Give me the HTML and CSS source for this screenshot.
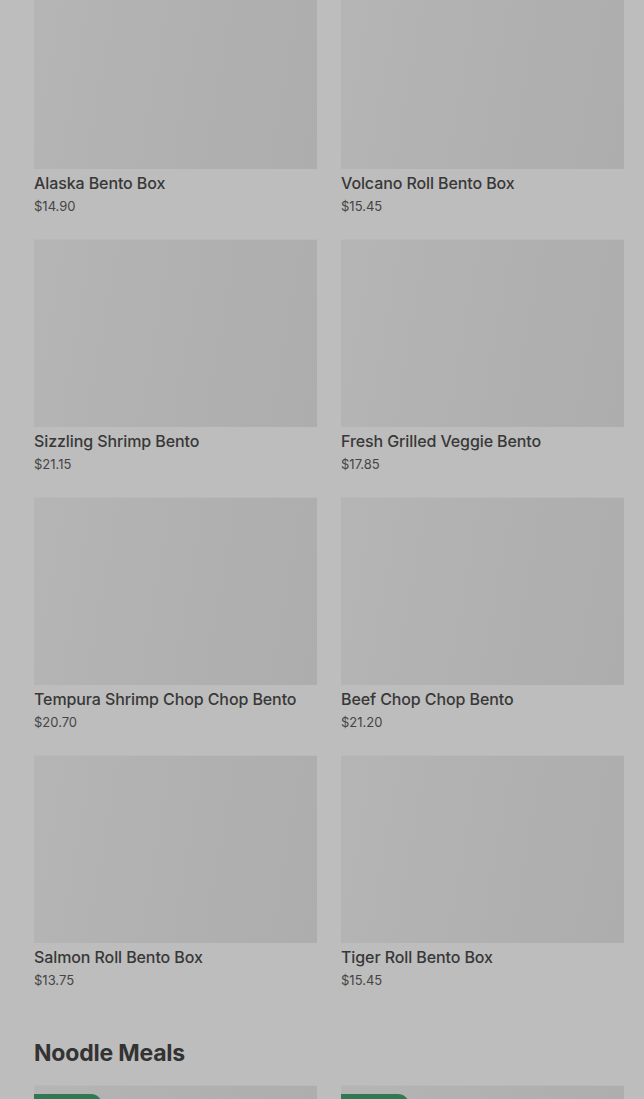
FILE: index.html
```html
<!DOCTYPE html>
<html lang="en">
<head>
  <meta charset="UTF-8" />
  <meta name="viewport" content="width=device-width, initial-scale=1.0"/>
  <title>Menu</title>
  <link rel="stylesheet" href="styles.css">
</head>
<body>
  <div class="menu">
    <div class="grid first">
      <div class="item">
        <div class="foto"></div>
        <div class="nombre">Alaska Bento Box</div>
        <div class="precio">$14.90</div>
      </div>
      <div class="item">
        <div class="foto"></div>
        <div class="nombre">Volcano Roll Bento Box</div>
        <div class="precio">$15.45</div>
      </div>
      <div class="item">
        <div class="foto"></div>
        <div class="nombre">Sizzling Shrimp Bento</div>
        <div class="precio">$21.15</div>
      </div>
      <div class="item">
        <div class="foto"></div>
        <div class="nombre">Fresh Grilled Veggie Bento</div>
        <div class="precio">$17.85</div>
      </div>
      <div class="item">
        <div class="foto"></div>
        <div class="nombre">Tempura Shrimp Chop Chop Bento</div>
        <div class="precio">$20.70</div>
      </div>
      <div class="item">
        <div class="foto"></div>
        <div class="nombre">Beef Chop Chop Bento</div>
        <div class="precio">$21.20</div>
      </div>
      <div class="item">
        <div class="foto"></div>
        <div class="nombre">Salmon Roll Bento Box</div>
        <div class="precio">$13.75</div>
      </div>
      <div class="item">
        <div class="foto"></div>
        <div class="nombre">Tiger Roll Bento Box</div>
        <div class="precio">$15.45</div>
      </div>
    </div>

    <h2>Noodle Meals</h2>

    <div class="grid">
      <div class="item">
        <div class="foto"><span class="badge"></span></div>
      </div>
      <div class="item">
        <div class="foto"><span class="badge"></span></div>
      </div>
    </div>
  </div>
</body>
</html>
```

FILE: styles.css
```css
body {
  margin: 0;
  background-color: #bdbdbd;
  font-family: Inter, "Noto Sans", Arial, sans-serif;
  color: #3a3a3a;
  overflow: hidden;
}

.menu {
  padding: 0 20px 0 34px;
}

.grid {
  display: grid;
  grid-template-columns: 283px 283px;
  column-gap: 24px;
  row-gap: 22px;
}

.first {
  margin-top: -19px;
}

.foto {
  position: relative;
  height: 188px;
  background: linear-gradient(100deg, #b5b5b5 0%, #b1b1b1 45%, #adadad 100%);
  border-top: 1px solid #b9b9b9;
  box-sizing: border-box;
}

.nombre {
  padding-top: 2px;
  font-size: 16px;
  font-weight: 500;
  line-height: 24px;
  letter-spacing: -0.1px;
  color: #383838;
}

.precio {
  font-size: 13px;
  line-height: 22px;
  color: #454545;
}

h2 {
  margin: 46px 0 16px;
  font-size: 23px;
  font-weight: 700;
  line-height: 32px;
  letter-spacing: -0.2px;
  color: #333;
}

/* etiqueta verde sobre la foto */
.badge {
  position: absolute;
  left: 0;
  top: 8px;
  width: 68px;
  height: 22px;
  border-radius: 0 11px 11px 0;
  background-color: #2f7a55;
}
```
